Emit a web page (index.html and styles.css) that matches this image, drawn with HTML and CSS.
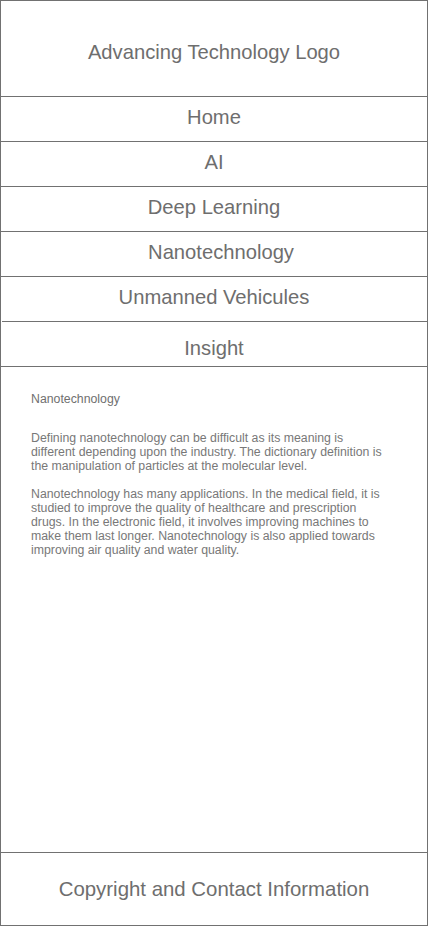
FILE: index.html
```html
<!DOCTYPE html>
<html lang="en">
<head>
<meta charset="utf-8">
<title>Advancing Technology</title>
<link rel="stylesheet" href="styles.css">
</head>
<body>
<div class="page">
  <header class="header">Advancing Technology Logo</header>
  <nav class="nav">
    <div class="nav-item">Home</div>
    <div class="nav-item">AI</div>
    <div class="nav-item">Deep Learning</div>
    <div class="nav-item nav-shift">Nanotechnology</div>
    <div class="nav-item nav-inset">Unmanned Vehicules</div>
    <div class="nav-item nav-last">Insight</div>
  </nav>
  <main class="content">
    <h1 class="title">Nanotechnology</h1>
    <p class="para">Defining nanotechnology can be difficult as its meaning is different depending upon the industry. The dictionary definition is the manipulation of particles at the molecular level.</p>
    <p class="para">Nanotechnology has many applications. In the medical field, it is studied to improve the quality of healthcare and prescription drugs. In the electronic field, it involves improving machines to make them last longer. Nanotechnology is also applied towards improving air quality and water quality.</p>
  </main>
  <footer class="footer">Copyright and Contact Information</footer>
</div>
</body>
</html>
```
FILE: styles.css
```css
* { box-sizing: border-box; }
html, body { margin: 0; padding: 0; background: #fff; }
body { font-family: "Liberation Sans", Arial, sans-serif; color: #6e6e6e; }
.page {
  width: 428px;
  height: 926px;
  border: 1px solid #717171;
  display: flex;
  flex-direction: column;
}
.header {
  height: 96px;
  border-bottom: 1px solid #717171;
  text-align: center;
  font-size: 20.2px;
  line-height: 20px;
  padding-top: 41px;
}
.nav { display: flex; flex-direction: column; }
.nav-item {
  height: 45px;
  border-bottom: 1px solid #717171;
  text-align: center;
  font-size: 20.2px;
  line-height: 20px;
  padding-top: 10px;
}
.nav-shift { padding-left: 14px; }
.nav-last { padding-top: 16px; }
.nav-inset { position: relative; border-bottom: none; }
.nav-inset::after {
  content: "";
  position: absolute;
  left: 1px;
  right: 0;
  bottom: 0;
  height: 1px;
  background: #717171;
}
.content {
  flex: 1;
  padding: 25px 42px 0 30px;
  color: #787878;
}
.title {
  margin: 0 0 25px;
  font-size: 12.3px;
  font-weight: normal;
  line-height: 14px;
  color: #707070;
}
.para {
  margin: 0 0 14px;
  font-size: 12.3px;
  line-height: 14px;
}
.footer {
  height: 73px;
  border-top: 1px solid #717171;
  text-align: center;
  font-size: 20.4px;
  line-height: 20px;
  padding-top: 26px;
}
```
